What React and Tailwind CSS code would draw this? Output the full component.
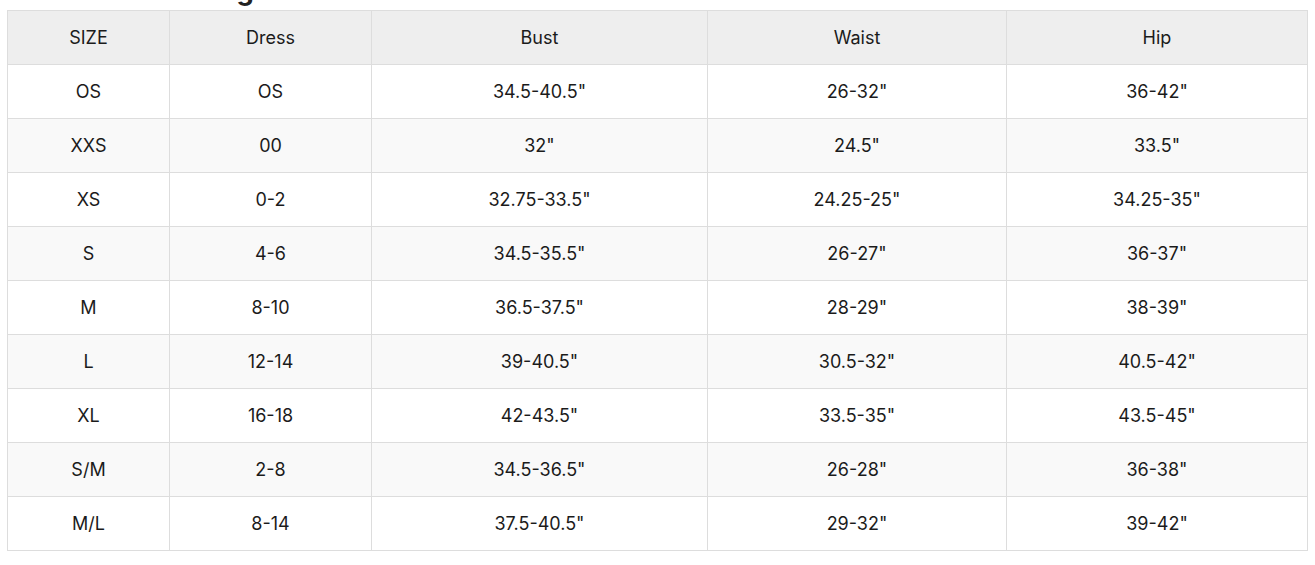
import React from "react";

const rows = [
  ["OS", "OS", "34.5-40.5\"", "26-32\"", "36-42\""],
  ["XXS", "00", "32\"", "24.5\"", "33.5\""],
  ["XS", "0-2", "32.75-33.5\"", "24.25-25\"", "34.25-35\""],
  ["S", "4-6", "34.5-35.5\"", "26-27\"", "36-37\""],
  ["M", "8-10", "36.5-37.5\"", "28-29\"", "38-39\""],
  ["L", "12-14", "39-40.5\"", "30.5-32\"", "40.5-42\""],
  ["XL", "16-18", "42-43.5\"", "33.5-35\"", "43.5-45\""],
  ["S/M", "2-8", "34.5-36.5\"", "26-28\"", "36-38\""],
  ["M/L", "8-14", "37.5-40.5\"", "29-32\"", "39-42\""],
];

const headers = ["SIZE", "Dress", "Bust", "Waist", "Hip"];
const widths = ["w-[162px]", "w-[202px]", "w-[336px]", "w-[299px]", "w-[301px]"];

export default function App() {
  return (
    <div className="bg-white w-[1315px] h-[565px] overflow-hidden text-[#1b1b1b] font-['Inter','Liberation_Sans',sans-serif]">
      <div className="h-[10px] overflow-hidden pl-[7px]">
        <div className="-mt-[28px] text-[27.5px] leading-[36px] font-bold text-[#222]">
          Women&apos;s Clothing
        </div>
      </div>
      <table className="ml-[7px] w-[1300px] border-collapse table-fixed text-[18px]">
        <colgroup>
          {widths.map((w, i) => (
            <col key={i} className={w} />
          ))}
        </colgroup>
        <thead>
          <tr className="bg-[#eeeeee]">
            {headers.map((h) => (
              <th
                key={h}
                className="h-[54px] border border-[#dddddd] font-normal text-center align-middle p-0"
              >
                {h}
              </th>
            ))}
          </tr>
        </thead>
        <tbody>
          {rows.map((r, i) => (
            <tr key={i} className={i % 2 === 0 ? "bg-white" : "bg-[#f9f9f9]"}>
              {r.map((c, j) => (
                <td
                  key={j}
                  className="h-[54px] border border-[#dddddd] text-center align-middle p-0"
                >
                  {c}
                </td>
              ))}
            </tr>
          ))}
        </tbody>
      </table>
    </div>
  );
}
